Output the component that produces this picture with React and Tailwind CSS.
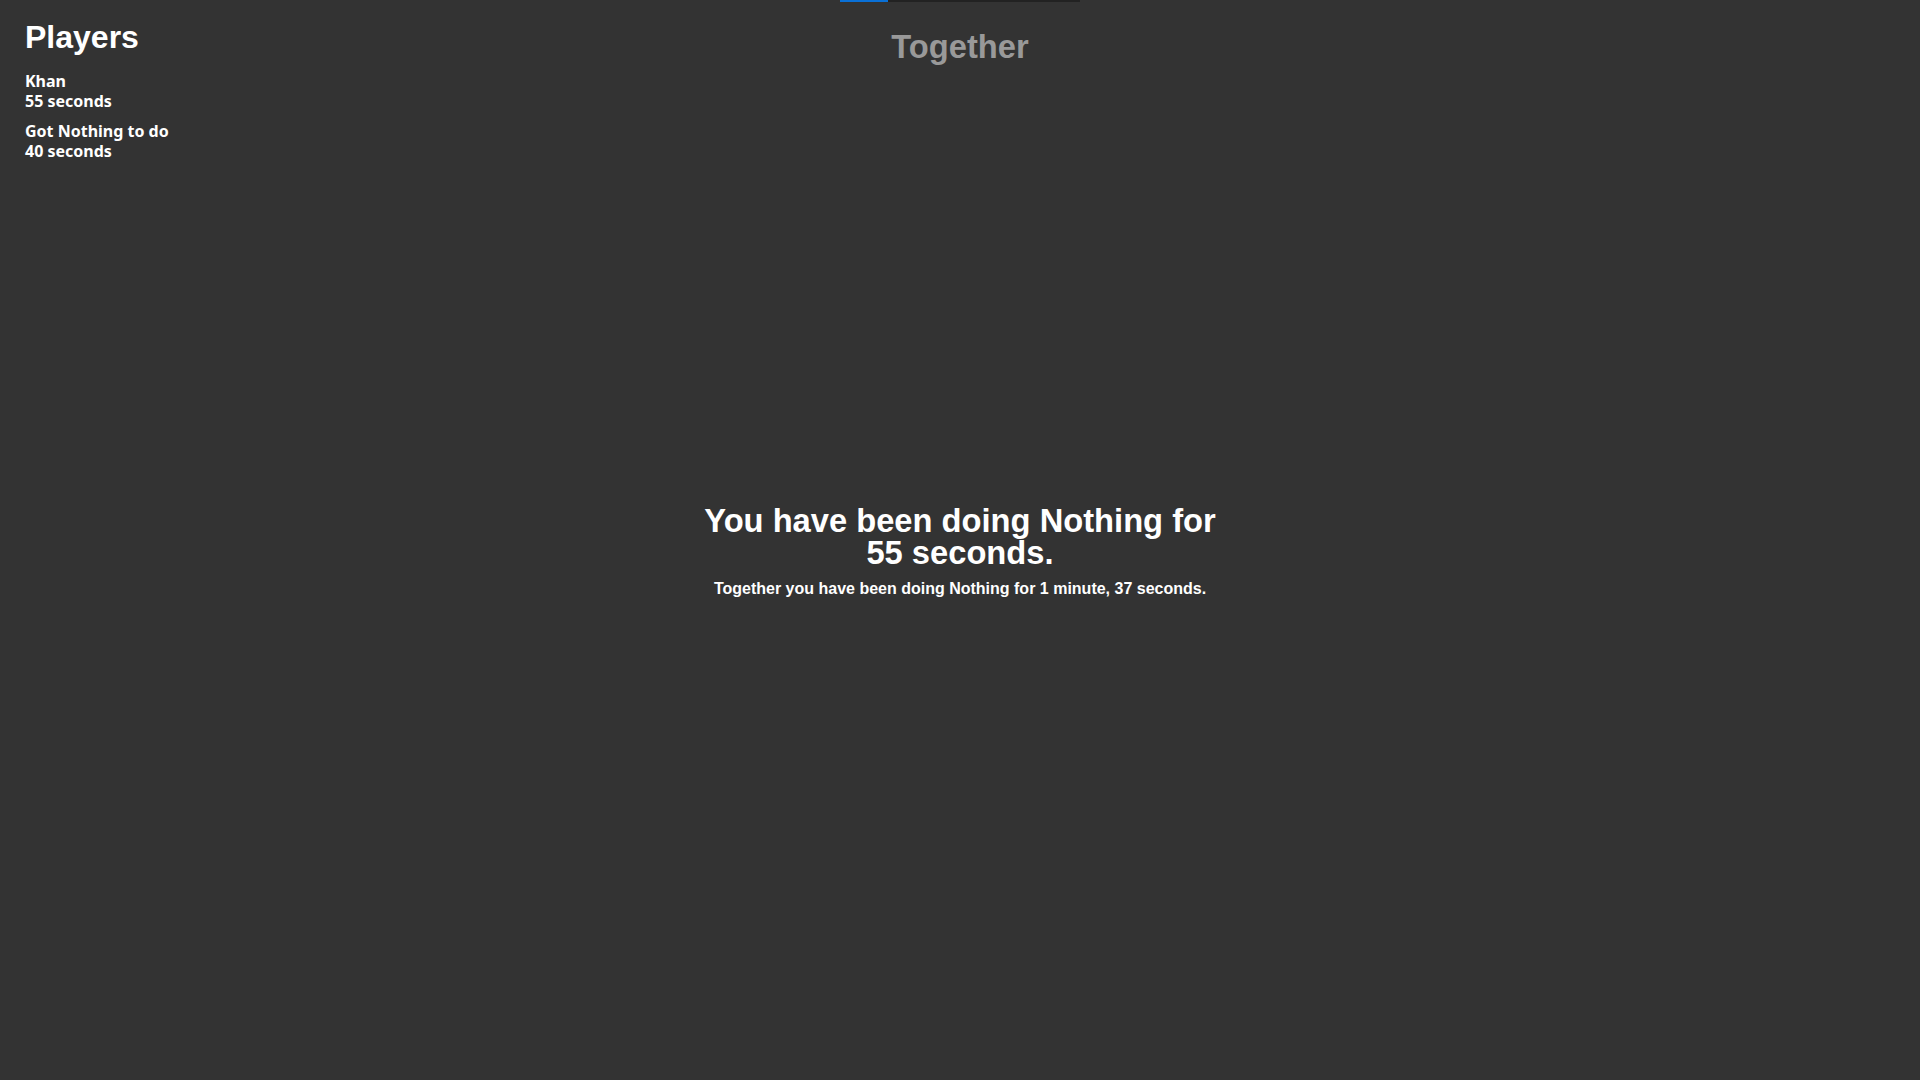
import React from "react";

const players = [
  { name: "Khan", time: "55 seconds" },
  { name: "Got Nothing to do", time: "40 seconds" },
];

export default function App() {
  return (
    <div
      className="min-h-screen w-full bg-[#333333] text-white grid grid-cols-3"
      style={{ fontFamily: '"Liberation Sans", Arial, sans-serif' }}
    >
      <aside className="pl-[25px] pt-[19px]">
        <h2 className="text-[32px] leading-[37px] font-bold text-white">Players</h2>
        <ul
          className="mt-[15px] flex flex-col gap-[10px]"
          style={{ fontFamily: '"Noto Sans", "Open Sans", sans-serif' }}
        >
          {players.map((p) => (
            <li key={p.name} className="text-[16px] leading-5 font-bold text-white">
              <div>{p.name}</div>
              <div>{p.time}</div>
            </li>
          ))}
        </ul>
      </aside>

      <main className="flex flex-col items-center">
        <div className="w-[240px] h-[2px] flex bg-[#222222]">
          <div className="w-[48px] h-full bg-[#0a70d6]" />
        </div>
        <h1 className="mt-[26px] text-[32.7px] leading-[37px] font-bold text-[#999999]">
          Together
        </h1>
        <section className="mt-[440px] w-[540px] text-center">
          <h2 className="text-[32.7px] leading-[32px] font-bold text-white">
            You have been doing Nothing for 55 seconds.
          </h2>
          <p className="mt-[11px] text-[16px] leading-[18px] font-bold text-white">
            Together you have been doing Nothing for 1 minute, 37 seconds.
          </p>
        </section>
      </main>

      <div />
    </div>
  );
}
